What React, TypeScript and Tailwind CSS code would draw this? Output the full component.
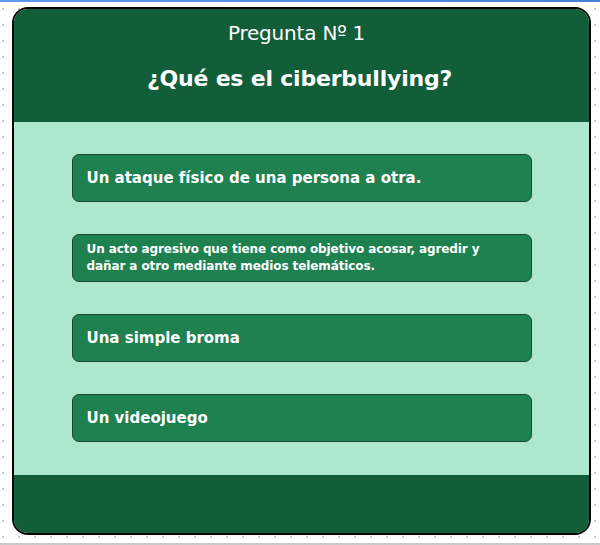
const options = [
  { text: 'Un ataque físico de una persona a otra.', small: false },
  {
    text: 'Un acto agresivo que tiene como objetivo acosar, agredir y dañar a otro mediante medios telemáticos.',
    small: true,
  },
  { text: 'Una simple broma', small: false },
  { text: 'Un videojuego', small: false },
]

export default function App() {
  return (
    <div className="w-[600px] h-[545px] flex flex-col bg-white bg-[radial-gradient(circle,#c4c9d4_1px,transparent_1.6px)] bg-[length:16px_16px] bg-[position:-5px_1px]">
      {/* top browser strip */}
      <div className="h-[2px] bg-gradient-to-r from-[#5b9bea] to-[#4a7fd8]" />

      <div className="pt-[5px] pl-[12px]">
        <div className="w-[579px] h-[528px] border-2 border-black rounded-[16px] overflow-hidden flex flex-col">
          {/* Header */}
          <div className="h-[113px] bg-[#125e38] flex flex-col items-center text-white font-['DejaVu_Sans',sans-serif]">
            <p className="mt-[11px] pr-[10px] text-[20px] leading-[26px] tracking-[-0.2px]">Pregunta Nº 1</p>
            <h1 className="mt-[18px] pr-[4px] text-[22px] leading-[30px] font-bold tracking-[-0.2px]">
              ¿Qué es el ciberbullying?
            </h1>
          </div>

          {/* Options */}
          <div className="flex-1 bg-[#aee8cc] flex flex-col items-center pt-8 gap-8">
            {options.map((o) => (
              <button
                key={o.text}
                className="w-[460px] h-[48px] shrink-0 rounded-[7px] border border-[#1d4630] bg-[#1f8150] px-[14px] text-left text-white font-bold font-['DejaVu_Sans',sans-serif]"
              >
                {o.small ? (
                  <span className="block pr-[20px] text-[12px] leading-[17px] tracking-[-0.1px]">{o.text}</span>
                ) : (
                  <span className="block text-[15px] leading-[22px]">{o.text}</span>
                )}
              </button>
            ))}
          </div>

          {/* Footer */}
          <div className="h-[58px] bg-[#125e38]" />
        </div>
      </div>

      <div className="mt-auto h-[2px] bg-[#c9c9c9]" />
    </div>
  )
}
